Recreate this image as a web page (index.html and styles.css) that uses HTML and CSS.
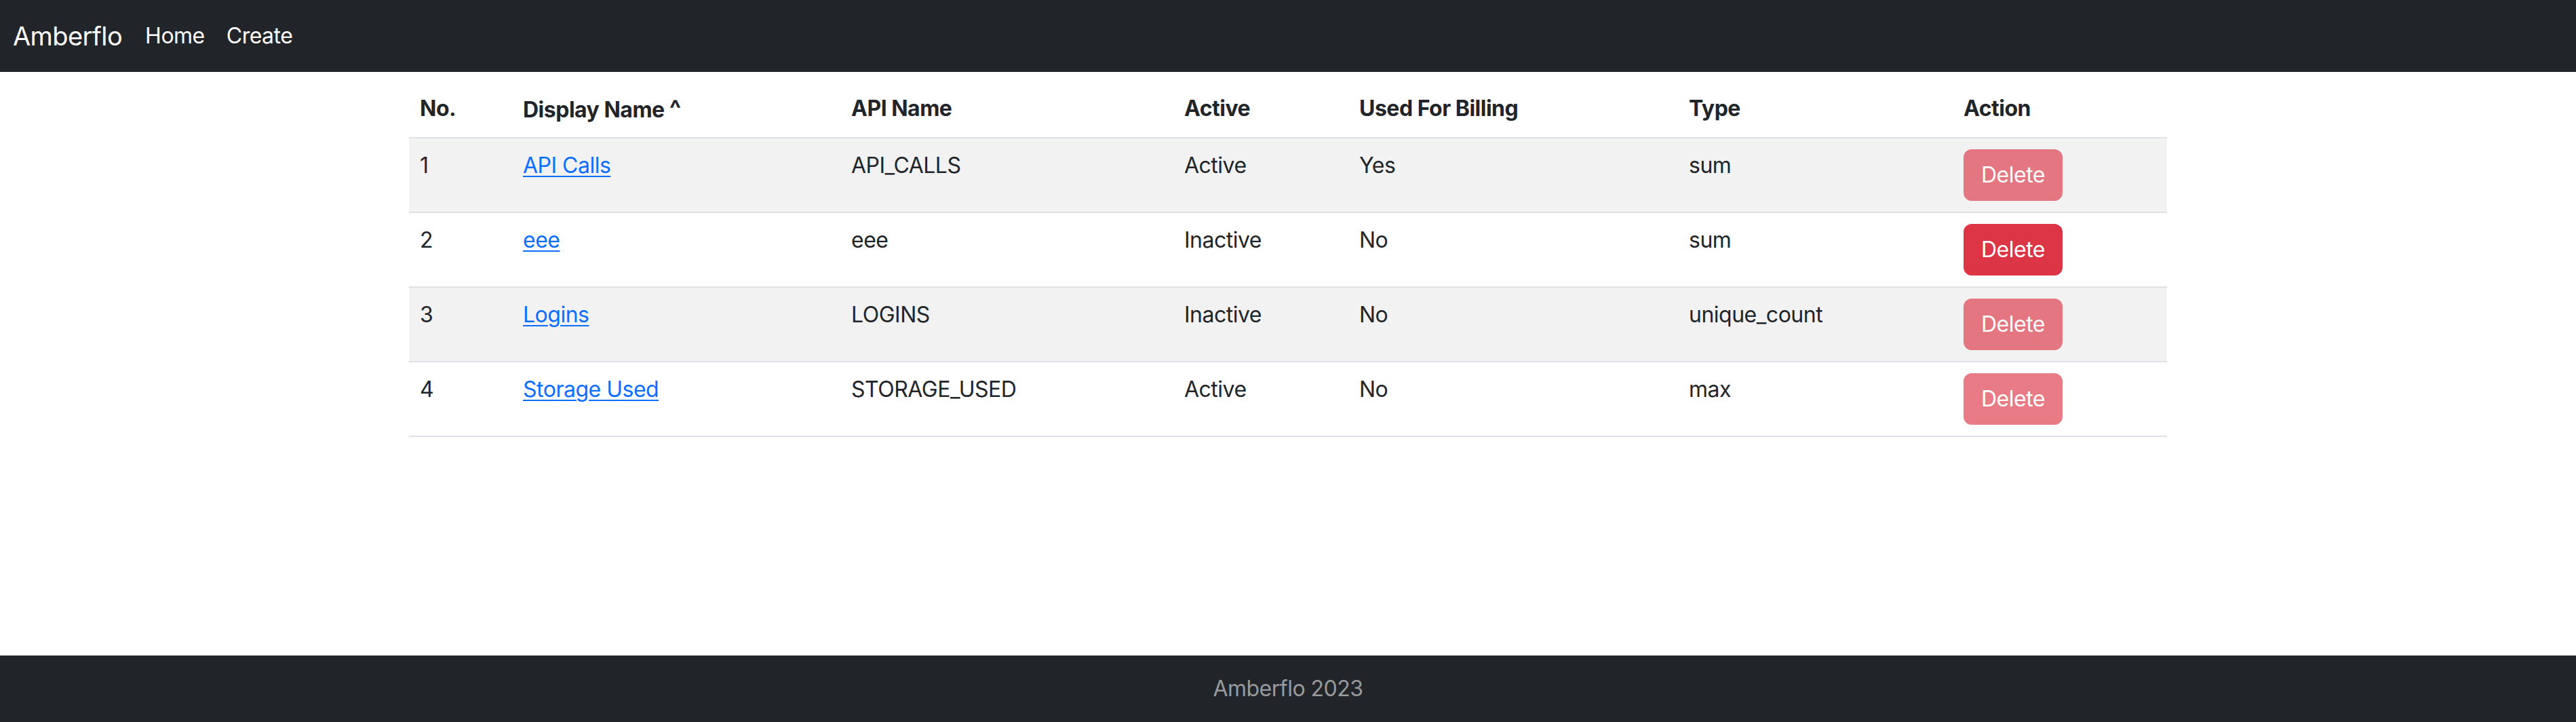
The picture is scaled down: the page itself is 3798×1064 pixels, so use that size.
FILE: index.html
```html
<!DOCTYPE html>
<html lang="en">
<head>
<meta charset="utf-8">
<title>Amberflo</title>
<link rel="stylesheet" href="styles.css">
</head>
<body>
<nav class="navbar">
  <a class="brand" href="#">Amberflo</a>
  <a class="nav-link" href="#">Home</a>
  <a class="nav-link" href="#">Create</a>
</nav>
<main class="main">
  <div class="container">
    <table class="table">
      <colgroup>
        <col class="c-no"><col class="c-display"><col class="c-api"><col class="c-active"><col class="c-billing"><col class="c-type"><col class="c-action">
      </colgroup>
      <thead>
        <tr><th>No.</th><th>Display Name <span class="caret">^</span></th><th>API Name</th><th>Active</th><th>Used For Billing</th><th>Type</th><th>Action</th></tr>
      </thead>
      <tbody>
        <tr class="striped"><td>1</td><td><a class="link" href="#">API Calls</a></td><td>API_CALLS</td><td>Active</td><td>Yes</td><td>sum</td><td><button class="btn btn-disabled" disabled>Delete</button></td></tr>
        <tr><td>2</td><td><a class="link" href="#">eee</a></td><td>eee</td><td>Inactive</td><td>No</td><td>sum</td><td><button class="btn">Delete</button></td></tr>
        <tr class="striped"><td>3</td><td><a class="link" href="#">Logins</a></td><td>LOGINS</td><td>Inactive</td><td>No</td><td>unique_count</td><td><button class="btn btn-disabled" disabled>Delete</button></td></tr>
        <tr><td>4</td><td><a class="link" href="#">Storage Used</a></td><td>STORAGE_USED</td><td>Active</td><td>No</td><td>max</td><td><button class="btn btn-disabled" disabled>Delete</button></td></tr>
      </tbody>
    </table>
  </div>
</main>
<footer class="footer">Amberflo 2023</footer>
</body>
</html>
```
FILE: styles.css
```css
* { box-sizing: border-box; }
html, body { margin: 0; padding: 0; }
body {
  font-family: Inter, "Noto Sans", "Liberation Sans", sans-serif;
  font-size: 32px;
  line-height: 48px;
  letter-spacing: -0.5px;
  color: #212529;
  background: #fff;
  height: 100vh;
  display: flex;
  flex-direction: column;
}
.navbar {
  height: 106px;
  background: #212529;
  display: flex;
  align-items: center;
  padding: 0 0 0 19px;
  flex: none;
}
.brand {
  color: #fff;
  font-size: 38px;
  line-height: 60px;
  letter-spacing: -0.6px;
  text-decoration: none;
  margin-right: 18px;
}
.nav-link {
  color: #fff;
  font-size: 32px;
  text-decoration: none;
  padding: 0 16px;
}
.main { flex: 1; }
.container {
  width: 2592px;
  margin: 14px auto 0;
}
.table {
  width: 100%;
  border-collapse: collapse;
  table-layout: fixed;
}
.c-no { width: 152px; }
.c-display { width: 484px; }
.c-api { width: 491px; }
.c-active { width: 258px; }
.c-billing { width: 486px; }
.c-type { width: 405px; }
.c-action { width: 316px; }
.table th, .table td {
  padding: 16px;
  text-align: left;
  vertical-align: top;
  border-bottom: 2px solid #dee2e6;
}
.table th { font-weight: 700; }
.caret { font-size: 36px; }
.striped td { background: #f2f2f2; }
.link { color: #0d6efd; text-decoration: underline; text-underline-offset: 4px; text-decoration-thickness: 2px; }
.btn {
  font-family: inherit;
  font-size: 32px;
  line-height: 48px;
  letter-spacing: -0.5px;
  padding: 12px 24px;
  border: 2px solid #dc3545;
  border-radius: 12px;
  background: #dc3545;
  color: #fff;
  display: inline-block;
  margin: 0;
}
.btn-disabled { opacity: 0.65; }
.footer {
  flex: none;
  height: 98px;
  background: #212529;
  color: #999a9c;
  text-align: center;
  line-height: 98px;
  font-size: 32px;
}
```
